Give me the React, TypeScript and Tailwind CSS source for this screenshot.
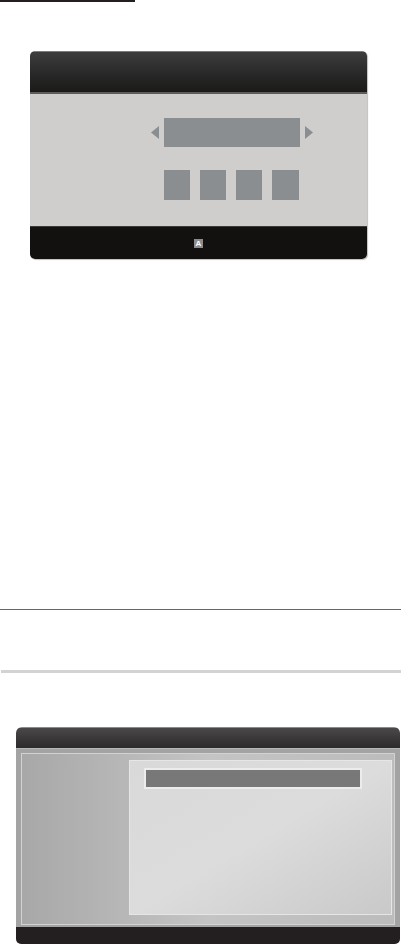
import React from 'react';

const Triangle: React.FC<{ dir: 'left' | 'right' }> = ({ dir }) => (
  <svg width="8" height="13" viewBox="0 0 8 13" className="shrink-0">
    {dir === 'left' ? (
      <polygon points="8,0 8,13 0,6.5" fill="#8b8e90" />
    ) : (
      <polygon points="0,0 0,13 8,6.5" fill="#8b8e90" />
    )}
  </svg>
);

const PinPanel: React.FC = () => (
  <div className="ml-[30px] w-[337px] rounded-[5px] overflow-hidden shadow-[1px_1px_1px_rgba(0,0,0,0.25)]">
    <div className="h-[43px] bg-gradient-to-b from-[#3d3d3d] via-[#2a2a2a] to-[#1b1a19] border-t border-[#7c7c7c] border-b-2 border-b-[#5c5c5c]" />
    <div className="h-[132px] bg-[#cfcecc] pt-[24px]">
      <div className="flex items-center pl-[121px] gap-[5px]">
        <Triangle dir="left" />
        <div className="w-[136px] h-[29px] bg-[#8b8e90]" />
        <Triangle dir="right" />
      </div>
      <div className="flex pl-[134px] gap-[10px] mt-[23px]">
        <div className="w-[26px] h-[30px] bg-[#8b8e90]" />
        <div className="w-[26px] h-[30px] bg-[#8b8e90]" />
        <div className="w-[26px] h-[30px] bg-[#8b8e90]" />
        <div className="w-[27px] h-[30px] bg-[#8b8e90]" />
      </div>
    </div>
    <div className="h-[33px] bg-[#121110] border-t border-[#3a3a3a] flex items-center justify-center">
      <span className="w-[9px] h-[9px] bg-[#8c8c8c] text-white text-[8px] leading-[9px] font-bold text-center font-['Liberation_Sans',sans-serif]">
        A
      </span>
    </div>
  </div>
);

const ListPanel: React.FC = () => (
  <div className="ml-[16px] w-[384px] rounded-t-[6px] rounded-b-[5px] overflow-hidden">
    <div className="h-[21px] bg-gradient-to-b from-[#4a4848] to-[#2c2a2a] border-t border-[#8a8a8a]" />
    <div className="h-[179px] bg-[#a3a3a3] pt-[4px] pl-[5px] pr-[5px] pb-[2px] border-t border-[#b8b8b8]">
      <div className="h-full border border-[#d2d2d2] bg-gradient-to-r from-[#a8a8a8] via-[#c4c4c4] to-[#bcbcbc] pt-[6px] pl-[107px] pr-[2px] pb-[9px]">
        <div className="h-full border border-[#e6e6e6] bg-gradient-to-br from-[#d9d9d9] via-[#dcdcdc] to-[#c9c9c9] pt-[7px] pl-[14px] pr-[29px]">
          <div className="h-[21px] border-2 border-[#ececec] bg-[#797878]" />
        </div>
      </div>
    </div>
    <div className="h-[17px] bg-[#231f20]" />
  </div>
);

const App: React.FC = () => {
  return (
    <div className="w-[401px] h-[945px] bg-white overflow-hidden">
      <div className="w-[135px] h-[2px] bg-[#231f20]" />
      <div className="mt-[49px]">
        <PinPanel />
      </div>
      <div className="mt-[350px] h-px bg-[#666666]" />
      <div className="mt-[60px] ml-px h-[3px] bg-[#d3d3d3]" />
      <div className="mt-[54px]">
        <ListPanel />
      </div>
    </div>
  );
};

export default App;
